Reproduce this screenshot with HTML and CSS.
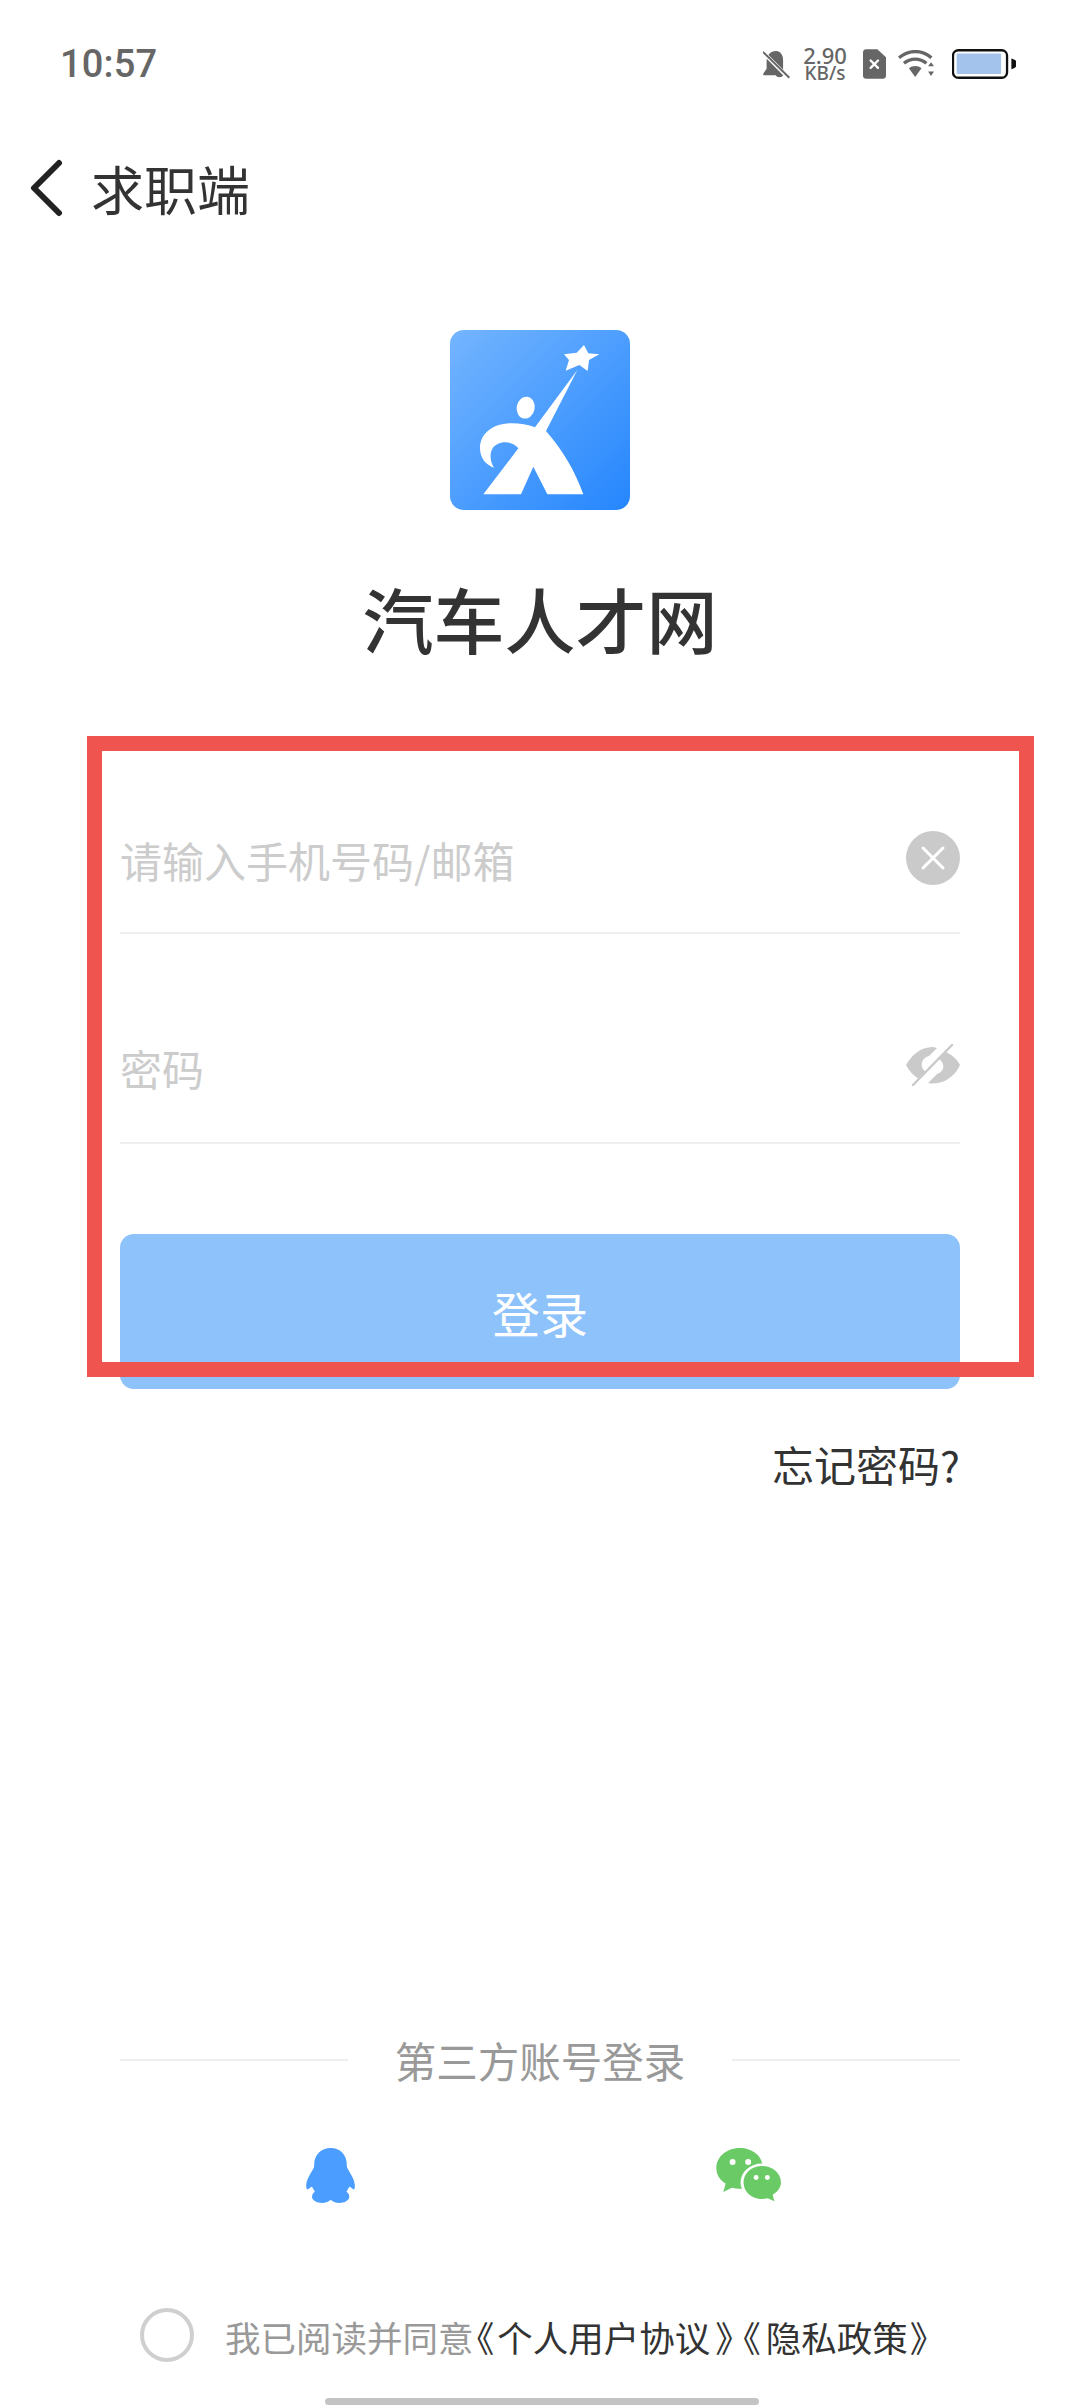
FILE: index.html
```html
<!DOCTYPE html>
<html lang="zh-CN">
<head>
<meta charset="utf-8">
<title>汽车人才网</title>
<link rel="stylesheet" href="styles.css">
</head>
<body>
<div class="page">
  <div class="status-bar">
    <span class="time">10:57</span>
    <div class="status-icons">
      <svg class="ic-bell" viewBox="130 85 82 88"><path fill="#666" d="M170 88c-18 0-29 13-29 32v22l-10 14v6h38c2 8 20 8 22 0h8v-6l-8-12v-28c0-16-8-28-21-28z"/><path stroke="#fff" stroke-width="12" d="M122 84l92 92"/><path stroke="#666" stroke-width="6" d="M130 91l80 78"/></svg>
      <div class="speed"><span>2.90</span><span class="speed-unit">KB/s</span></div>
      <svg class="ic-sim" viewBox="428 88 69 89"><path fill="#666" d="M438 88h33l26 24v55a10 10 0 0 1-10 10h-49a10 10 0 0 1-10-10v-69a10 10 0 0 1 10-10z"/><path stroke="#fff" stroke-width="7" stroke-linecap="round" d="M451 122l22 22m0-22l-22 22"/></svg>
      <svg class="ic-wifi" viewBox="535 95 112 84"><g fill="none" stroke="#666" stroke-width="10"><path d="M538 118c30-25 70-25 98 0"/><path d="M553 135c20-17 48-17 68 0"/></g><path fill="#666" d="M568 150c12-9 27-9 38 0l-19 26z"/><path fill="#666" d="M635 132l9 12h-18zM626 160h18l-9 13z"/></svg>
      <svg class="ic-battery" viewBox="697 88 193 89"><rect x="700" y="91" width="163" height="83" rx="16" fill="#fff" stroke="#111" stroke-width="7"/><rect x="711" y="101" width="134" height="62" rx="3" fill="#a3c3ec"/><path fill="#111" d="M876 116l8 3a14 14 0 0 1 0 26l-8 3z"/></svg>
    </div>
  </div>

  <header class="nav">
    <svg class="back" viewBox="0 0 34 58"><path d="M30 4L5 29l25 25" fill="none" stroke="#222" stroke-width="6" stroke-linecap="round" stroke-linejoin="round"/></svg>
    <span class="nav-title">求职端</span>
  </header>

  <div class="brand">
    <svg class="logo" viewBox="90 60 540 540">
      <defs><linearGradient id="lg" x1="0" y1="0" x2="1" y2="1"><stop offset="0" stop-color="#74b5ff"/><stop offset="1" stop-color="#2586fd"/></linearGradient></defs>
      <rect x="90" y="60" width="540" height="540" rx="42" fill="url(#lg)"/>
      <path fill="#fff" d="M492 105l13 25 33 3-31 17-4 33-25-18-41 17 10-32-15-17 38-5z"/>
      <ellipse cx="317" cy="293" rx="27" ry="33" transform="rotate(10 317 293)" fill="#fff"/>
      <path fill="#fff" d="M472 180L345 352c-20-8-45-12-70-12-55 0-95 30-95 75 0 30 18 50 42 58-12-20-14-42-4-58 10-18 52-30 77 0L190 553h113l37-83 42 83h108c-25-70-60-130-112-190z"/>
    </svg>
    <h1 class="app-name">汽车人才网</h1>
  </div>

  <form class="form">
    <div class="field">
      <span class="placeholder">请输入手机号码/邮箱</span>
      <svg class="field-icon" viewBox="0 0 54 54"><circle cx="27" cy="27" r="27" fill="#cacaca"/><path stroke="#fff" stroke-width="3" stroke-linecap="round" d="M17 17l20 20m0-20L17 37"/></svg>
    </div>
    <div class="field field-pw">
      <span class="placeholder">密码</span>
      <svg class="field-icon eye" viewBox="0 0 54 42"><path fill="#cacaca" d="M27 3C14 3 5 12 0 21c3 6 8 11 13 14l7-7c-7-5-5-14 3-16l8-8zM40 8l-7 7c7 5 5 13-2 15l-9 9c2 .5 3 .5 5 .5 13 0 23-9 27-18.500-3-6-8-10-14-13z"/><path stroke="#cacaca" stroke-width="2.500" stroke-linecap="round" d="M46 1L7 41"/></svg>
    </div>
    <button type="button" class="login">登录</button>
    <div class="forgot">忘记密码?</div>
    <div class="annotation"></div>
  </form>

  <div class="third">
    <div class="third-head"><i class="rule"></i><span>第三方账号登录</span><i class="rule"></i></div>
    <div class="third-icons">
      <svg class="qq" viewBox="108 83 147 167"><path fill="#4b9eff" d="M182 83c-30 0-50 22-50 50 0 4 0 6-1 9-6 14-20 30-23 50-1 8 1 17 3 17 4 0 9-7 14-8 3 4 6 10 9 15-6 4-10 11-8 19 3 9 15 15 30 15 12 0 20-5 26-10 6 5 14 10 26 10 15 0 27-6 30-15 2-8-2-15-8-19 3-5 6-11 9-15 5 1 10 8 14 8 2 0 3-9 2-17-3-20-17-36-23-50-1-3-1-5-1-9 0-28-19-50-49-50z"/></svg>
      <svg class="wechat" viewBox="1340 83 197 163"><path fill="#6acb66" d="M1410 83c-39 0-70 27-70 60 0 20 10 36 28 47l-7 26 26-13c8 2 15 3 23 3 39 0 70-27 70-63s-31-60-70-60z"/><ellipse cx="1478" cy="187" rx="65" ry="57" fill="#fff"/><path fill="#6acb66" d="M1478 137c-32 0-56 22-56 50s24 50 56 50c6 0 12-1 17-2l20 9-5-20c15-9 25-22 25-37 0-28-25-50-57-50z"/><g fill="#fff"><circle cx="1389" cy="125" r="9"/><circle cx="1436" cy="125" r="9"/><circle cx="1460" cy="172" r="7.500"/><circle cx="1494" cy="172" r="7.500"/></g></svg>
    </div>
  </div>

  <div class="agree">
    <span class="radio"></span>
    <p class="agree-text">我已阅读并同意<span class="link"><span class="bk bk-first">《</span>个人用户协议<span class="bk bk-mid">》</span><span class="bk bk-mid">《</span>隐私政策<span class="bk bk-last">》</span></span></p>
  </div>
  <div class="home-bar"></div>
</div>
</body>
</html>
```
FILE: styles.css
```css
* { box-sizing: border-box; }
html, body { margin: 0; padding: 0; background: #fff; }
body { font-family: "Noto Sans CJK SC", "Noto Sans", sans-serif; }
.page { position: relative; width: 1080px; height: 2408px; display: flex; flex-direction: column; overflow: hidden; }

.status-bar { height: 138px; padding: 42px 64px 0 60px; display: flex; justify-content: space-between; align-items: flex-start; flex: none; }
.time { font: 500 38px/44px Roboto, sans-serif; color: #666; letter-spacing: .2px; }
.status-icons { display: flex; align-items: center; height: 44px; }
.ic-bell { width: 27px; height: 29px; margin-right: 12px; }
.speed { width: 46px; display: flex; flex-direction: column; align-items: center; font: 500 22px/19px "Noto Sans", sans-serif; color: #666; margin-right: 15px; }
.speed-unit { font-size: 19px; line-height: 17px; }
.ic-sim { width: 23px; height: 30px; margin-right: 12px; }
.ic-wifi { width: 37px; height: 28px; margin-right: 17px; }
.ic-battery { width: 64px; height: 30px; }

.nav { flex: none; height: 100px; padding: 0 0 0 29px; display: flex; align-items: center; }
.back { width: 34px; height: 58px; }
.nav-title { font-size: 53px; line-height: 60px; color: #333; margin-left: 28px; }

.brand { flex: none; display: flex; flex-direction: column; align-items: center; padding-top: 92px; }
.logo { width: 180px; height: 180px; display: block; }
.app-name { margin: 63px 0 0; font-size: 71px; line-height: 88px; font-weight: 500; color: #333; }

.form { position: relative; flex: none; margin: 0 120px; padding-top: 135px; }
.field { height: 138px; display: flex; align-items: center; justify-content: space-between; border-bottom: 2px solid #eeeeee; }
.field-pw { height: 210px; }
.placeholder { font-size: 42px; line-height: 50px; color: #cccccc; margin-bottom: 8px; }
.field-pw .placeholder { margin-bottom: 0; margin-top: 60px; }
.field-icon { width: 54px; height: 54px; flex: none; margin-bottom: 12px; }
.eye { height: 42px; margin-bottom: 0; margin-top: 54px; }
.login { display: block; width: 100%; height: 155px; margin-top: 90px; border: 0; border-radius: 14px; background: #8ec2fb; color: #fff; font: 400 48px/1 "Noto Sans CJK SC", sans-serif; padding: 0; }
.forgot { text-align: right; font-size: 42px; line-height: 50px; color: #333; margin-top: 50px; }
.annotation { position: absolute; left: -33px; right: -74px; top: 75px; height: 641px; border: 15px solid #f0544f; pointer-events: none; }

.third { flex: none; margin: 545px 120px 0; }
.third-head { display: flex; align-items: center; justify-content: space-between; color: #999; font-size: 41.500px; line-height: 52px; }
.rule { display: block; width: 228px; height: 2px; background: #eee; }
.third-icons { display: flex; justify-content: space-between; padding: 62px 178px 0 186px; align-items: flex-start; }
.qq { width: 49px; height: 55px; display: block; }
.wechat { width: 66px; height: 54px; display: block; }

.agree { flex: none; display: flex; align-items: center; padding-left: 140px; margin-top: 105px; }
.radio { width: 54px; height: 54px; border: 4px solid #cfcfcf; border-radius: 50%; flex: none; }
.agree-text { margin: 0 0 0 31px; font-size: 35.500px; line-height: 44px; color: #999; white-space: nowrap; position: relative; top: 2px; text-spacing-trim: space-all; }
.link { color: #333; }
.bk { font-feature-settings: "halt"; }
.bk-first { padding: 0 3px; }
.bk-mid { padding: 0 5px; }
.bk-last { padding-left: 2px; }
.home-bar { position: absolute; left: 325px; bottom: 3px; width: 434px; height: 7px; border-radius: 4px; background: #c4c4c4; }
```
